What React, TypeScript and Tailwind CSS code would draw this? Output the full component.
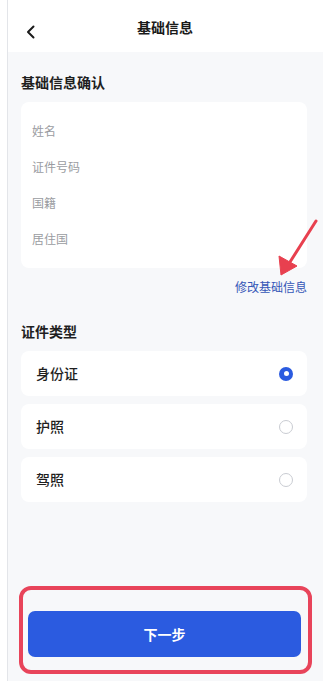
const font = { fontFamily: '"Noto Sans CJK SC", "Noto Sans", sans-serif' };

const infoFields = ['姓名', '证件号码', '国籍', '居住国'];
const idTypes = [
  { label: '身份证', checked: true },
  { label: '护照', checked: false },
  { label: '驾照', checked: false },
];

const Radio = ({ checked }: { checked: boolean }) =>
  checked ? (
    <span className="w-[14px] h-[14px] rounded-full bg-[#2b5be0] flex items-center justify-center">
      <span className="w-[5px] h-[5px] rounded-full bg-white" />
    </span>
  ) : (
    <span className="w-[14px] h-[14px] rounded-full border border-[#c9ccd2] bg-white" />
  );

export default function App() {
  return (
    <div className="w-[323px] h-[681px] bg-white flex" style={font}>
      <div className="w-[7px] shrink-0" />
      <div className="flex-1 border-l border-[#e3e5e9] bg-[#f7f8fa] flex flex-col relative">
        {/* header */}
        <div className="h-[52px] bg-white flex items-center relative shrink-0">
          <svg className="absolute left-[18px] top-[25px]" width="9" height="14" viewBox="0 0 9 14" fill="none">
            <path d="M7.5 1.5L2 7l5.5 5.5" stroke="#1a1a1a" strokeWidth="2" strokeLinecap="round" strokeLinejoin="round" />
          </svg>
          <div className="flex-1 text-center text-[14px] leading-[20px] font-bold text-[#1a1a1a] pt-[1px] pr-[1px]">基础信息</div>
        </div>

        <div className="pl-[13px] pr-[16px] flex flex-col">
          <div className="mt-[20px] text-[14px] leading-[20px] font-bold text-[#1f1f1f]">基础信息确认</div>
          <div className="mt-[10px] bg-white rounded-[8px] pt-[11px] pb-[11px]">
            {infoFields.map((f) => (
              <div key={f} className="h-[36px] flex items-center px-[11px] text-[12px] text-[#9a9ca1]">
                {f}
              </div>
            ))}
          </div>
          <div className="mt-[10px] text-right text-[12px] leading-[17px] text-[#3557b7]">修改基础信息</div>

          <div className="mt-[26px] text-[14px] leading-[20px] font-bold text-[#1f1f1f]">证件类型</div>
          <div className="mt-[10px] flex flex-col gap-[8px]">
            {idTypes.map((t) => (
              <div key={t.label} className="h-[45px] bg-white rounded-[8px] flex items-center justify-between pl-[15px] pr-[14px]">
                <span className="text-[14px] font-medium text-[#1f1f1f]">{t.label}</span>
                <Radio checked={t.checked} />
              </div>
            ))}
          </div>
        </div>

        {/* bottom button with red annotation box */}
        <div className="mt-auto mb-[7px] ml-[11px] mr-[11px] border-[4px] border-[#e8445a] rounded-[12px] pl-[5px] pr-[7px] pt-[21px] pb-[13px]">
          <button className="w-full h-[46px] rounded-[7px] bg-[#2b5be0] text-white text-[14px] font-bold">下一步</button>
        </div>

        {/* red arrow annotation */}
        <svg className="absolute left-[258px] top-[216px]" width="52" height="66" viewBox="0 0 52 66" fill="none">
          <path d="M50 5L24 46" stroke="#e8404f" strokeWidth="3" strokeLinecap="round" />
          <path d="M15 59L13 40L31 50Z" fill="#e8404f" stroke="#e8404f" strokeWidth="1" strokeLinejoin="round" />
        </svg>
      </div>
    </div>
  );
}
